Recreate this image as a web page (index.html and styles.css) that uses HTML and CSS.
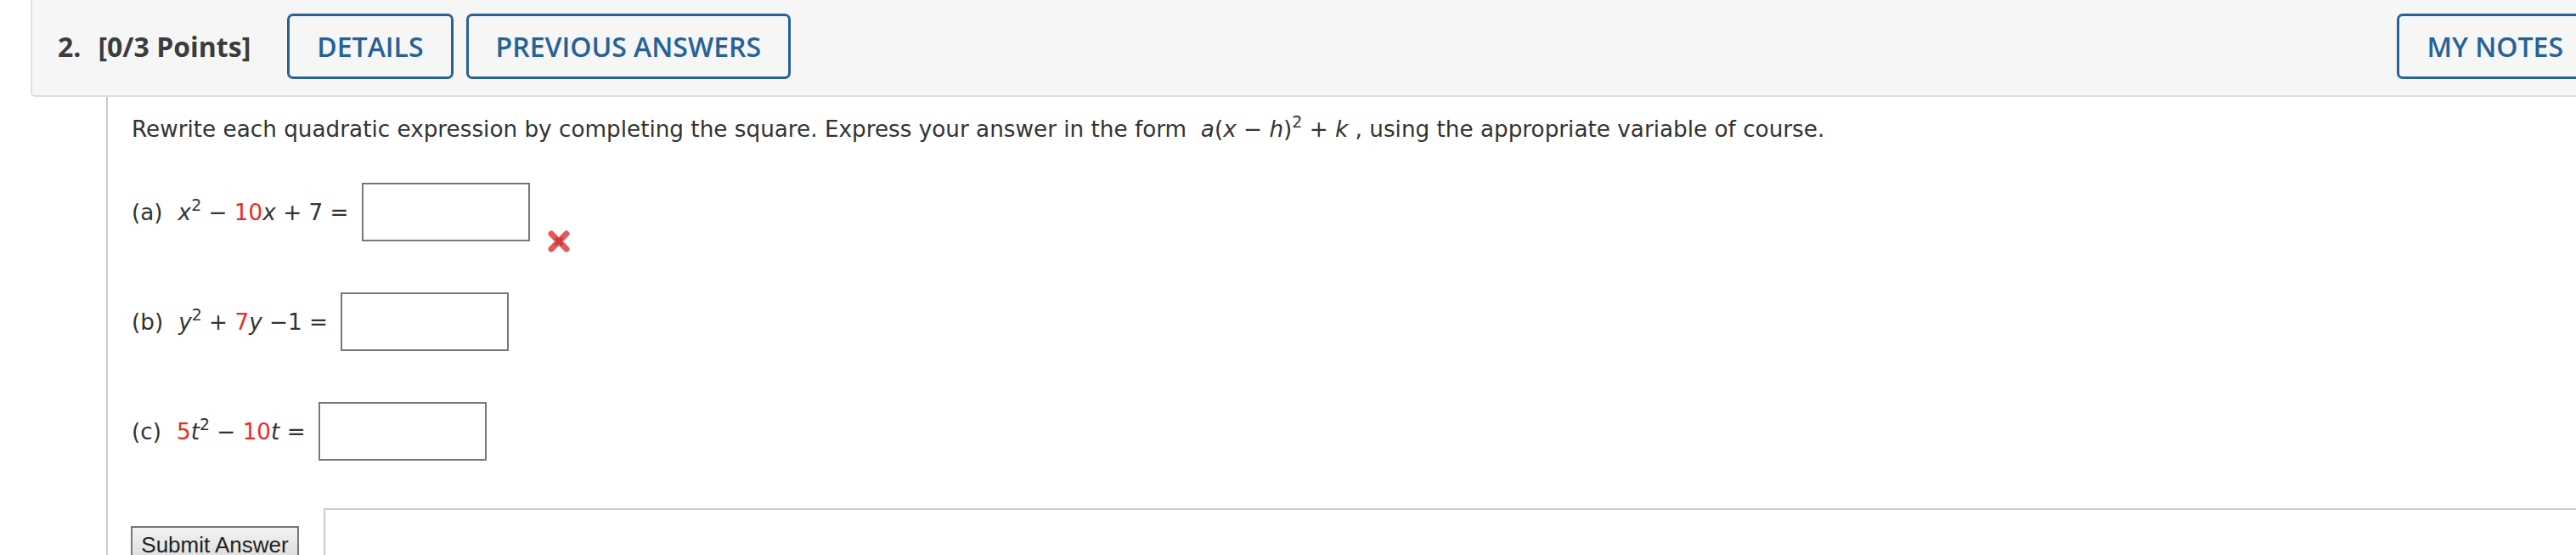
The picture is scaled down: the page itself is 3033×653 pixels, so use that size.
FILE: index.html
```html
<!DOCTYPE html>
<html lang="en">
<head>
<meta charset="utf-8">
<title>Question 2</title>
<link rel="stylesheet" href="styles.css">
</head>
<body>
<div class="header">
  <span class="qnum">2.</span>
  <span class="points">[0/3 Points]</span>
  <button class="hbtn">DETAILS</button>
  <button class="hbtn">PREVIOUS ANSWERS</button>
  <button class="hbtn notes">MY NOTES</button>
</div>
<div class="content">
  <p class="prompt">Rewrite each quadratic expression by completing the square. Express your answer in the form&nbsp; <span class="math"><i>a</i>(<i>x</i> − <i>h</i>)<sup>2</sup> + <i>k</i></span> , using the appropriate variable of course.</p>
  <div class="part">
    <span class="label">(a)</span>
    <span class="expr"><i>x</i><sup>2</sup> − <span class="red">10</span><i>x</i> + 7 =</span>
    <input class="answer" type="text">
    <svg class="wrong" width="28" height="28" viewBox="0 0 28 28" aria-hidden="true">
      <path d="M5 5 L23 23 M23 5 L5 23" stroke="#e35a5a" stroke-width="7" stroke-linecap="round"/>
      <path d="M11 11 L17 17 M17 11 L11 17" stroke="#cf3c3c" stroke-width="4" stroke-linecap="round"/>
    </svg>
  </div>
  <div class="part">
    <span class="label">(b)</span>
    <span class="expr"><i>y</i><sup>2</sup> + <span class="red">7</span><i>y</i> −1 =</span>
    <input class="answer" type="text">
  </div>
  <div class="part">
    <span class="label">(c)</span>
    <span class="expr"><span class="red">5</span><i>t</i><sup>2</sup> − <span class="red">10</span><i>t</i> =</span>
    <input class="answer" type="text">
  </div>
  <div class="submit-row">
    <button class="submit">Submit Answer</button>
    <div class="feedback-box"></div>
  </div>
</div>
</body>
</html>
```
FILE: styles.css
```css
html, body {
  margin: 0;
  padding: 0;
  overflow: hidden;
  background: #ffffff;
}

.header {
  display: flex;
  align-items: center;
  margin-left: 36px;
  padding: 16px 0 19px 30px;
  background: #f6f6f6;
  border-left: 2px solid #e2e2e2;
  border-bottom: 2px solid #dedede;
  border-bottom-left-radius: 5px;
  overflow: hidden;
  font-family: "Open Sans", "DejaVu Sans", sans-serif;
}

.qnum,
.points {
  font-size: 32px;
  font-weight: 700;
  color: #3c3c3c;
}

.points {
  margin-left: 20px;
  margin-right: 43px;
}

.hbtn {
  height: 77px;
  padding: 0 32px;
  margin-right: 15px;
  background: transparent;
  border: 3px solid #266297;
  border-radius: 7px;
  color: #266297;
  font-family: "Open Sans", "DejaVu Sans", sans-serif;
  font-size: 32px;
  font-weight: 600;
}

.hbtn.notes {
  margin-left: auto;
  margin-right: -20px;
}

.content {
  margin-left: 125px;
  border-left: 2px solid #cccccc;
  padding: 20px 0 0 28px;
  font-family: "DejaVu Sans", Verdana, sans-serif;
  font-size: 26.25px;
  color: #333333;
}

.prompt {
  margin: 0;
  line-height: 36px;
}

.math i,
.expr i {
  font-style: italic;
}

sup {
  font-size: 0.72em;
  line-height: 0;
  vertical-align: 0.6em;
}

.red {
  color: #ee2b1e;
}

.part {
  display: flex;
  align-items: center;
  margin-top: 60px;
}

.part:first-of-type {
  margin-top: 45px;
}

.label {
  margin-right: 18px;
}

.answer {
  box-sizing: border-box;
  width: 198px;
  height: 69px;
  margin: 0 0 0 15px;
  border: 2px solid #787878;
  background: #ffffff;
  padding: 0 6px;
  font-size: 26px;
}

.wrong {
  align-self: flex-end;
  margin: 0 0 -14px 20px;
}

.submit-row {
  display: flex;
  align-items: flex-start;
  margin-top: 56px;
}

.submit {
  width: 198px;
  height: 44px;
  margin: 21px 0 0 -1px;
  background: linear-gradient(#f2f2f2, #dcdcdc);
  border: 2px solid #777777;
  border-radius: 0;
  font-family: "Liberation Sans", Arial, sans-serif;
  font-size: 26px;
  color: #222222;
  padding: 0;
}

.feedback-box {
  flex: 1;
  height: 120px;
  margin-left: 29px;
  border-top: 2px solid #cccccc;
  border-left: 2px solid #cccccc;
}
```
